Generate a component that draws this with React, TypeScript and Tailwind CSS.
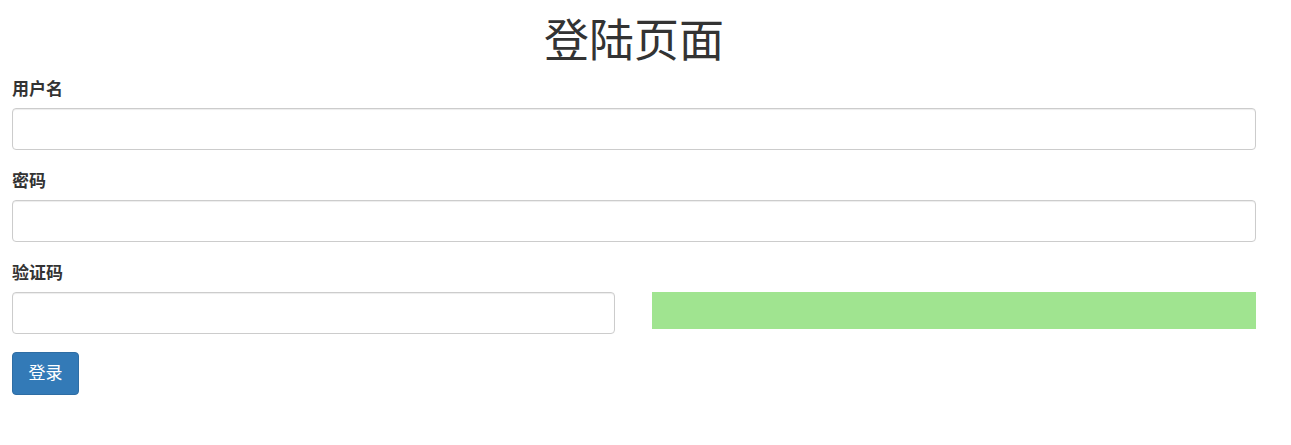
import React from "react"

const font = { fontFamily: '"Helvetica Neue", "Liberation Sans", "Noto Sans CJK SC", sans-serif' }

function Field({ label, children }: { label: string; children: React.ReactNode }) {
  return (
    <div className="mb-[20px]">
      <label className="block text-[17px] leading-[24px] font-bold text-[#333] mb-[6px]">{label}</label>
      {children}
    </div>
  )
}

const inputCls =
  "block w-full h-[42px] px-3 rounded-[4px] border border-[#ccc] bg-white text-[16px] text-[#555] shadow-[inset_0_1px_1px_rgba(0,0,0,0.075)] outline-none"

export default function App() {
  return (
    <div className="min-h-screen bg-white text-[#333]" style={font}>
      <div className="w-[1244px] ml-[12px]">
        <h1 className="text-center text-[45px] leading-[50px] font-normal text-[#333] pt-[17px] mb-[11px]">
          登陆页面
        </h1>
        <form>
          <Field label="用户名">
            <input type="text" className={inputCls} />
          </Field>
          <Field label="密码">
            <input type="password" className={inputCls} />
          </Field>
          <div className="mb-[18px]">
            <label className="block text-[17px] leading-[24px] font-bold text-[#333] mb-[6px]">验证码</label>
            <div className="grid grid-cols-[603px_604px] gap-[37px] items-start">
              <input type="text" className={inputCls} />
              <div className="h-[37px] bg-[#a0e490]" />
            </div>
          </div>
          <button
            type="button"
            className="h-[43px] w-[67px] rounded-[4px] bg-[#337ab7] border border-[#2e6da4] text-white text-[17px] leading-none"
          >
            登录
          </button>
        </form>
      </div>
    </div>
  )
}
